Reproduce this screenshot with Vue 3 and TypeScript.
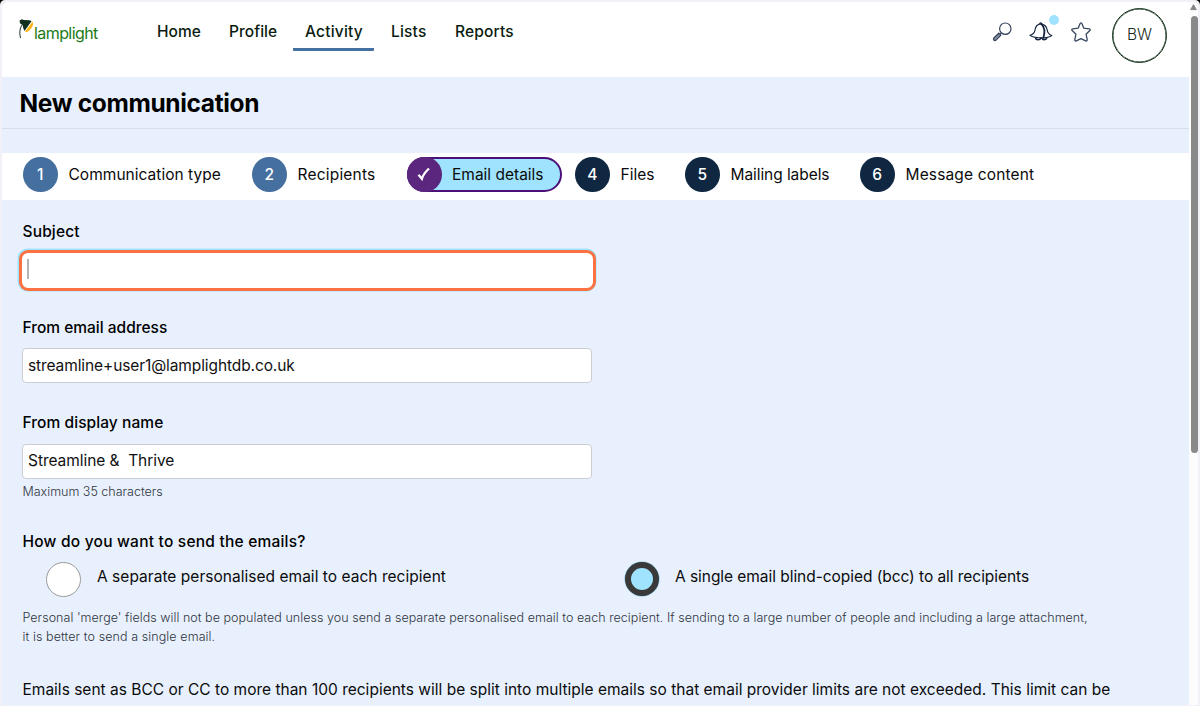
<script setup lang="ts">
import { ref } from 'vue'

interface NavItem { label: string; key: string; active?: boolean }
interface Step { mark: string; label: string; key: string; state: 'done' | 'current' | 'todo' }

const nav: NavItem[] = [
  { label: 'Home', key: 'home' },
  { label: 'Profile', key: 'profile' },
  { label: 'Activity', key: 'activity', active: true },
  { label: 'Lists', key: 'lists' },
  { label: 'Reports', key: 'reports' },
]

const steps: Step[] = [
  { mark: '1', label: 'Communication type', key: 'type', state: 'done' },
  { mark: '2', label: 'Recipients', key: 'recipients', state: 'done' },
  { mark: '✓', label: 'Email details', key: 'details', state: 'current' },
  { mark: '4', label: 'Files', key: 'files', state: 'todo' },
  { mark: '5', label: 'Mailing labels', key: 'labels', state: 'todo' },
  { mark: '6', label: 'Message content', key: 'content', state: 'todo' },
]

const fromEmail = ref('streamline+user1@lamplightdb.co.uk')
const displayName = ref('Streamline &  Thrive')
const mode = ref<'separate' | 'single'>('single')
</script>

<template>
  <div class="frame">
    <div class="window">
      <main class="page">
        <header class="top">
          <div class="logo">
            <svg class="lamp" viewBox="0 0 15 20" width="15" height="20">
              <path d="M1.500 19C.3 14 .6 9.800 2.800 6.200" fill="none" stroke="#26352c" stroke-width="1" />
              <path d="M.5 1.700 2.600.2l2.400.9 5.600.2 2 1L5.600 12 4.500 10 3.600 6.200 1 4.200z" fill="#12301f" />
              <path d="M13.400 2.800C15.100 4.800 13.500 8.300 11.300 10.400 9.300 12.400 7.200 13.600 5.900 12.700z" fill="#fdb515" />
              <path d="M13 2.500 5.700 12.200" stroke="#fff" stroke-width=".5" />
            </svg>
            <span class="brand">lamplight</span>
          </div>
          <nav class="nav">
            <a v-for="n in nav" :key="n.key" :class="['nav-item', n.key, { active: n.active }]">{{ n.label }}</a>
          </nav>
          <div class="tools">
            <svg class="search" viewBox="0 0 20 20" width="20" height="20" fill="none" stroke="#33405a">
              <circle cx="13.300" cy="6.700" r="5.700" stroke-width="1.200" />
              <path d="M9.200 10.800 7.700 12.300" stroke-width="1.200" />
              <path d="M6.800 11.200 8.800 13.200 4.100 18.100Q2.900 19 1.800 18 1 17 1.900 16z" stroke-width="1.200" fill="#8d96a3" />
            </svg>
            <div class="bell">
              <svg viewBox="0 0 24 20" width="24" height="20" fill="none" stroke="#14233f" stroke-width="1.200" stroke-linejoin="round" stroke-linecap="round">
                <path d="M11.500 1.800C7.800 2.300 6.400 4.900 6 8 5.600 11.200 4.600 12.300 1 13.400c1.500 1.300 4.500 2 7.500 2.300l6.500.2c3-.3 6-.8 7.700-2.300-3-1.300-4.200-2.800-4.500-5.600C17.800 4.900 15.500 2.300 11.500 1.800z" />
                <path d="M12.500 2.200c3 3 3.800 7.200 2 13.400" stroke-width="1.800" />
                <path d="M6.500 16c.5 2.200 4.500 2.500 5.200.2M13 16.200c.6 2 4.200 1.900 4.800-.2" stroke-width="1.500" />
                <path d="M10.700 1.600Q11.700.3 12.700 1.600" />
              </svg>
              <span class="dot"></span>
            </div>
            <svg class="star" viewBox="0 0 20 20" width="20" height="20" fill="none" stroke="#3a4760" stroke-width="1.300" stroke-linejoin="round">
              <path d="M9.100 1.500Q10 .1 10.900 1.500L12.800 6.200 18.300 6.800Q19.900 7.200 18.800 8.500L15.100 12.300 16.200 17.600Q16.300 19.300 14.700 18.900L10 16.600 5.300 18.900Q3.600 19.300 3.800 17.600L4.900 12.300 1.200 8.500Q.1 7.200 1.700 6.800L7.200 6.200z" />
            </svg>
            <div class="avatar">BW</div>
          </div>
        </header>

        <div class="title-band"><h1>New communication</h1></div>

        <ol class="steps">
          <li v-for="s in steps" :key="s.key" :class="['step', s.state, s.key]">
            <span class="num">
              <svg v-if="s.state === 'current'" viewBox="0 0 14 14" width="14" height="14">
                <path d="M1.500 7.800 4.900 11.800Q6.500 6.500 12 1.500" fill="none" stroke="#fff" stroke-width="2.300" />
              </svg>
              <template v-else>{{ s.mark }}</template>
            </span>
            <span class="label">{{ s.label }}</span>
          </li>
        </ol>

        <form class="form">
          <label class="heading h-subject">Subject</label>
          <div class="input focused"><span class="caret"></span></div>
          <label class="heading h-email">From email address</label>
          <div class="input email">{{ fromEmail }}</div>
          <label class="heading h-name">From display name</label>
          <div class="input name">{{ displayName }}</div>
          <p class="hint max">Maximum 35 characters</p>
          <div class="heading h-send">How do you want to send the emails?</div>
          <div class="radios">
            <label class="option" @click="mode = 'separate'">
              <span :class="['radio', { on: mode === 'separate' }]"></span>
              <span class="o-sep">A separate personalised email to each recipient</span>
            </label>
            <label class="option" @click="mode = 'single'">
              <span :class="['radio', { on: mode === 'single' }]"></span>
              <span class="o-single">A single email blind-copied (bcc) to all recipients</span>
            </label>
          </div>
          <p class="hint merge">
            <span class="m1">Personal 'merge' fields will not be populated unless you send a separate personalised email to each recipient. If sending to a large number of people and including a large attachment,</span><br />
            <span class="m2">it is better to send a single email.</span>
          </p>
          <p class="limit">Emails sent as BCC or CC to more than 100 recipients will be split into multiple emails so that email provider limits are not exceeded. This limit can be</p>
        </form>
      </main>
      <aside class="scrollbar">
        <svg viewBox="0 0 9 13" width="9" height="13"><path d="M4.500 2.700 7.300 7.600H1.700z" fill="#858585" stroke="#858585" stroke-linejoin="round" /></svg>
        <div class="thumb"></div>
      </aside>
    </div>
  </div>
</template>

<style>
html, body { margin: 0; background: #000; overflow: hidden; }
</style>

<style scoped>
* { box-sizing: border-box; }
.frame {
  width: 1200px; height: 706px; padding: 2px 2px 1px; overflow: hidden;
  background: #f1f1f7; border-radius: 5px 5px 0 0;
  font-family: Inter, "Liberation Sans", sans-serif; font-size: 15.500px; color: #0b0b0b;
}
.window { display: flex; height: 703px; border-radius: 6px 6px 0 0; overflow: hidden; background: #fcfcfc; }
.page { width: 1187px; background: #e8f0fe; overflow: hidden; }
.top { display: flex; height: 75px; background: #fff; align-items: flex-start; }
.logo { display: flex; width: 143px; padding: 17px 0 0 17px; }
.lamp { flex: none; }
.brand { color: #217a16; font-size: 16px; line-height: 20px; margin-top: 4px; white-space: nowrap; letter-spacing: -.58px; }
.nav { display: flex; padding-top: 12px; }
.nav-item { height: 37px; padding: 8px 0 0 12px; line-height: 20px; font-weight: 500; white-space: nowrap; color: #0a1c0f; }
.home { width: 72px; }
.profile { width: 76px; letter-spacing: .05px; }
.activity { width: 81px; margin-right: 5px; letter-spacing: .2px; }
.lists { width: 64px; letter-spacing: .2px; }
.reports { letter-spacing: .15px; }
.active { border-bottom: 3px solid #4470a2; border-radius: 1px; }
.tools { display: flex; margin-left: auto; }
.search { margin: 20px 17px 0 0; }
.bell { position: relative; width: 24px; height: 20px; margin: 20px 18px 0 0; }
.dot { position: absolute; left: 20px; top: -7px; width: 10px; height: 10px; border-radius: 50%; background: #9fe3ff; }
.star { margin: 20px 21px 0 0; }
.avatar { width: 55px; height: 55px; margin: 6px 22px 0 0; border: 1.500px solid #12301a; border-radius: 50%; text-align: center; line-height: 52px; color: #1a2b1c; font-weight: 350; box-shadow: inset 0 0 0 .5px #12301a; }
.title-band { height: 52px; border-bottom: 1px solid #d9dde5; }
h1 { margin: 0; padding: 9px 0 0 17.500px; font-size: 24.500px; line-height: 34px; font-weight: 750; letter-spacing: -.35px; color: #000; }
.steps {
  display: grid; grid-template-columns: 229px 155px 168px 110px 175px 200px;
  align-items: center; height: 46.500px; margin: 24px 0 0; padding: 0 0 4px 21px; list-style: none; background: #fff;
}
.step { display: flex; align-items: center; height: 35px; white-space: nowrap; }
.label { font-weight: 380; margin-left: .5px; }
.type .label { letter-spacing: .03px; }
.recipients .label { letter-spacing: .2px; }
.details .label { margin-left: 0; }
.labels .label { letter-spacing: -.07px; }
.content .label { letter-spacing: .15px; }
.num { display: flex; flex: none; align-items: center; justify-content: center; width: 34.500px; height: 34.500px; border-radius: 50%; margin-right: 10.500px; color: #fff; font-weight: 500; background: #0f2741; }
.done .num { background: #446f9f; }
.current { width: 155px; border: 2px solid #4b0f78; border-radius: 18px; background: #9fe3ff; }
.current .num { margin-left: -2px; background: #5b267e; }
.form { padding: 22.500px 0 0 20px; }
.heading { display: block; height: 20px; line-height: 20px; font-weight: 550; color: #000; padding-left: .5px; }
.input { width: 570px; height: 35px; border: 1px solid #cbcdd1; border-radius: 4px; background: #fff; padding-left: 5px; line-height: 32px; white-space: pre; color: #111; }
.focused { width: 577px; height: 41px; margin: 7.500px 0 0 -3px; border: 3px solid #fb7141; border-radius: 9px; box-shadow: -.5px -.5px 0 1px #9fe3ff; display: flex; align-items: center; }
.caret { width: 1.500px; height: 20px; background: #b4b4b4; margin-bottom: 2px; }
.h-subject { letter-spacing: .15px; }
.h-email { margin-top: 27px; letter-spacing: 0; }
.email { margin-top: 10px; letter-spacing: -.1px; line-height: 33px; }
.h-name { margin-top: 30px; letter-spacing: .07px; }
.name { margin-top: 11px; letter-spacing: -.05px; }
.hint { margin: 0; font-size: 12.500px; line-height: 19px; color: #30353d; white-space: nowrap; font-weight: 300; padding-left: .5px; }
.max { margin-top: 3px; }
.h-send { margin-top: 31px; letter-spacing: .22px; }
.radios { display: flex; padding: 9px 0 0 24px; }
.option { display: flex; flex: none; width: 578px; height: 36px; white-space: nowrap; line-height: 31px; }
.o-sep { letter-spacing: .03px; }
.o-single { letter-spacing: -.05px; }
.radio { flex: none; width: 35px; height: 35px; border: 1px solid #9a9a9a; border-radius: 50%; background: #fff; margin: 1px 16px 0 0; }
.radio.on { border: 6px solid #393939; background: #9fe3ff; width: 34px; height: 34px; margin: 1px 16.500px 0 .5px; box-shadow: 0 0 0 .5px #78bdd4; }
.merge { margin-top: 11px; }
.m1 { letter-spacing: .04px; }
.m2 { letter-spacing: .09px; }
.limit { margin: 33px 0 0; padding-left: .5px; line-height: 22px; white-space: nowrap; letter-spacing: .005px; }
.scrollbar { width: 9px; background: #fcfcfc; }
.scrollbar svg { display: block; }
.thumb { width: 7px; height: 437px; margin: 1px 0 0 2px; background: #898989; border-radius: 4px; }
</style>
